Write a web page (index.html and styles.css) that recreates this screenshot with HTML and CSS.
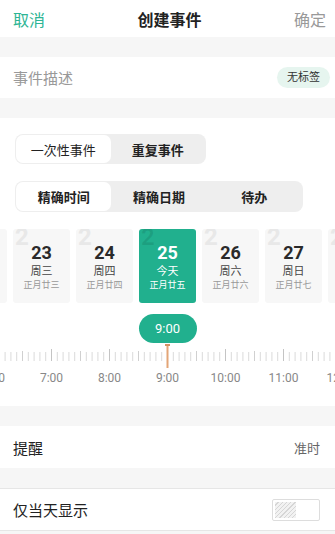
FILE: index.html
```html
<!DOCTYPE html>
<html>
<head>
    <meta name="viewport" content="width=device-width, initial-scale=1.0">
    <link rel="stylesheet" href="styles.css">
</head>
<body>

<div class="header">
    <span class="cancel">取消</span>
    <span class="title">创建事件</span>
    <span class="ok">确定</span>
</div>

<div class="gap"></div>

<div class="desc-row">
    <span class="desc">事件描述</span>
    <span class="tag">无标签</span>
</div>

<div class="gap"></div>

<div class="section">
    <div class="seg seg-two">
        <div class="seg-item active light">一次性事件</div>
        <div class="seg-item">重复事件</div>
    </div>

    <div class="seg seg-three">
        <div class="seg-item active">精确时间</div>
        <div class="seg-item">精确日期</div>
        <div class="seg-item">待办</div>
    </div>

    <div class="days">
        <div class="day"></div>
        <div class="day"><span class="mark">2</span><b>23</b><span class="wd">周三</span><span class="lunar">正月廿三</span></div>
        <div class="day"><span class="mark">2</span><b>24</b><span class="wd">周四</span><span class="lunar">正月廿四</span></div>
        <div class="day today"><span class="mark">2</span><b>25</b><span class="wd">今天</span><span class="lunar">正月廿五</span></div>
        <div class="day"><span class="mark">2</span><b>26</b><span class="wd">周六</span><span class="lunar">正月廿六</span></div>
        <div class="day"><span class="mark">2</span><b>27</b><span class="wd">周日</span><span class="lunar">正月廿七</span></div>
        <div class="day"><span class="mark">2</span></div>
    </div>

    <div class="time-pill">9:00</div>

    <svg class="ruler" width="335" height="24" viewBox="0 0 335 24">
        <defs>
            <pattern id="ticks" width="58" height="24" patternUnits="userSpaceOnUse" x="167">
                <rect x="0" y="5" width="1" height="12" fill="#c4c4c4"/>
                <rect x="5.8" y="8" width="1" height="9" fill="#dadada"/>
                <rect x="11.6" y="8" width="1" height="9" fill="#dadada"/>
                <rect x="17.4" y="8" width="1" height="9" fill="#dadada"/>
                <rect x="23.2" y="8" width="1" height="9" fill="#dadada"/>
                <rect x="29" y="7" width="1" height="10" fill="#d0d0d0"/>
                <rect x="34.8" y="8" width="1" height="9" fill="#dadada"/>
                <rect x="40.6" y="8" width="1" height="9" fill="#dadada"/>
                <rect x="46.4" y="8" width="1" height="9" fill="#dadada"/>
                <rect x="52.2" y="8" width="1" height="9" fill="#dadada"/>
            </pattern>
        </defs>
        <rect width="335" height="24" fill="url(#ticks)"/>
        <rect x="166.5" y="1" width="2" height="23" fill="#e3a577"/>
        <rect x="165" y="0" width="5" height="2" fill="#d39264"/>
    </svg>

    <div class="hours">
        <span>6:00</span>
        <span>7:00</span>
        <span>8:00</span>
        <span>9:00</span>
        <span>10:00</span>
        <span>11:00</span>
        <span>12:00</span>
    </div>
</div>

<div class="gap"></div>

<div class="row">
    <span class="label">提醒</span>
    <span class="value">准时</span>
</div>

<div class="gap"></div>

<div class="row bordered">
    <span class="label">仅当天显示</span>
    <span class="switch"><span class="knob"></span></span>
</div>

</body>
</html>
```

FILE: styles.css
```css
* {
    box-sizing: border-box;
}

body {
    margin: 0;
    background-color: #f6f6f6;
    font-family: Roboto, "Noto Sans CJK SC", sans-serif;
    color: #333;
}

.header {
    display: grid;
    grid-template-columns: 1fr auto 1fr;
    align-items: center;
    height: 37px;
    padding: 0 9px 0 13px;
    background-color: #ffffff;
    font-size: 16px;
}

.cancel {
    color: #2db594;
}

.title {
    font-weight: bold;
    color: #222;
}

.ok {
    justify-self: end;
    color: #999;
}

.gap {
    height: 20px;
}

.desc-row {
    display: flex;
    align-items: center;
    justify-content: space-between;
    height: 41px;
    padding: 0 5px 0 13px;
    background-color: #ffffff;
}

.desc {
    font-size: 15px;
    color: #999;
}

.tag {
    width: 53px;
    height: 21px;
    line-height: 21px;
    text-align: center;
    border-radius: 11px;
    background-color: #e6f5ef;
    font-size: 11px;
    color: #333;
}

.section {
    background-color: #ffffff;
    padding: 16px 0 20px;
}

.seg {
    display: grid;
    margin-left: 15px;
    height: 30px;
    padding: 1px;
    border-radius: 8px;
    background-color: #eeeeee;
}

.seg-two {
    width: 191px;
    grid-template-columns: 1fr 1fr;
}

.seg-three {
    width: 288px;
    margin-top: 17px;
    height: 31px;
    grid-template-columns: 1fr 1fr 1fr;
}

.seg-item {
    display: flex;
    align-items: center;
    justify-content: center;
    border-radius: 7px;
    font-size: 13px;
    font-weight: bold;
    color: #222;
}

.seg-item.active {
    background-color: #ffffff;
}

.seg-item.light {
    font-weight: normal;
}

.days {
    display: flex;
    justify-content: center;
    gap: 6px;
    margin-top: 17px;
    overflow: hidden;
}

.day {
    position: relative;
    flex: 0 0 57px;
    height: 74px;
    overflow: hidden;
    display: flex;
    flex-direction: column;
    align-items: center;
    padding-top: 14px;
    border-radius: 3px;
    background-color: #f7f7f7;
}

.day b {
    position: relative;
    font-size: 18px;
    line-height: 20px;
    color: #2a2a2a;
}

.day .wd {
    position: relative;
    font-size: 11px;
    line-height: 17px;
    color: #444;
}

.day .lunar {
    position: relative;
    font-size: 9px;
    line-height: 11px;
    color: #999;
}

.mark {
    position: absolute;
    top: -6px;
    left: 2px;
    font-size: 24px;
    font-weight: bold;
    color: #e8e8e8;
}

.day.today {
    background-color: #21b08e;
}

.day.today b,
.day.today .wd,
.day.today .lunar {
    color: #ffffff;
}

.day.today .mark {
    color: rgba(0, 0, 0, 0.09);
}

.time-pill {
    width: 58px;
    height: 29px;
    line-height: 29px;
    margin: 11px auto 0;
    border-radius: 15px;
    background-color: #21b08e;
    color: #ffffff;
    font-size: 13px;
    text-align: center;
}

.ruler {
    display: block;
    margin-top: 1px;
}

.hours {
    display: flex;
    justify-content: center;
    overflow: hidden;
    margin-top: 2px;
}

.hours span {
    flex: 0 0 58px;
    text-align: center;
    font-size: 12px;
    line-height: 16px;
    color: #888;
}

.row {
    display: flex;
    align-items: center;
    justify-content: space-between;
    height: 42px;
    padding: 0 15px 0 13px;
    background-color: #ffffff;
}

.row.bordered {
    height: 43px;
    border-top: 1px solid #e6e6e6;
    border-bottom: 1px solid #e6e6e6;
}

.label {
    font-size: 15px;
    color: #222;
}

.value {
    font-size: 13px;
    color: #666;
}

.switch {
    display: block;
    width: 48px;
    height: 22px;
    padding: 2px;
    border: 1px solid #dddddd;
    border-radius: 2px;
}

.knob {
    display: block;
    width: 21px;
    height: 16px;
    background: repeating-linear-gradient(135deg, #f2f2f2 0 2px, #d6d6d6 2px 3px);
}
```
